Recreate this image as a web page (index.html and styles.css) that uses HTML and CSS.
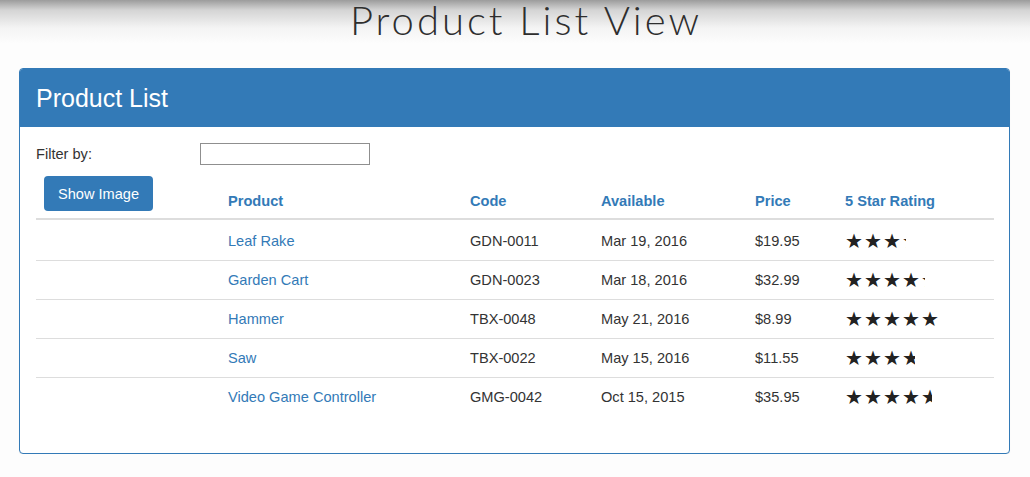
FILE: index.html
```html
<!DOCTYPE html>
<html>
<head>
<meta charset="utf-8">
<title>Product List View</title>
<link rel="stylesheet" href="styles.css">
</head>
<body>
<div class="top">
  <h1 class="title">Product List View</h1>
</div>
<div class="panel">
  <div class="panel-heading">Product List</div>
  <div class="panel-body">
    <div class="filter-row">
      <label class="filter-label">Filter by:</label>
      <input class="filter-input" type="text">
    </div>
    <table class="table">
      <thead>
        <tr>
          <th class="c-img"><button class="btn">Show Image</button></th>
          <th class="c-prod">Product</th>
          <th class="c-code">Code</th>
          <th class="c-avail">Available</th>
          <th class="c-price">Price</th>
          <th class="c-rate">5 Star Rating</th>
        </tr>
      </thead>
      <tbody>
        <tr>
          <td></td><td><a class="link">Leaf Rake</a></td><td>GDN-0011</td><td>Mar 19, 2016</td><td>$19.95</td>
          <td><span class="stars" style="width:61px"><span>★</span><span>★</span><span>★</span><span>★</span><span>★</span></span></td>
        </tr>
        <tr>
          <td></td><td><a class="link">Garden Cart</a></td><td>GDN-0023</td><td>Mar 18, 2016</td><td>$32.99</td>
          <td><span class="stars" style="width:80px"><span>★</span><span>★</span><span>★</span><span>★</span><span>★</span></span></td>
        </tr>
        <tr>
          <td></td><td><a class="link">Hammer</a></td><td>TBX-0048</td><td>May 21, 2016</td><td>$8.99</td>
          <td><span class="stars" style="width:95px"><span>★</span><span>★</span><span>★</span><span>★</span><span>★</span></span></td>
        </tr>
        <tr>
          <td></td><td><a class="link">Saw</a></td><td>TBX-0022</td><td>May 15, 2016</td><td>$11.55</td>
          <td><span class="stars" style="width:70px"><span>★</span><span>★</span><span>★</span><span>★</span><span>★</span></span></td>
        </tr>
        <tr>
          <td></td><td><a class="link">Video Game Controller</a></td><td>GMG-0042</td><td>Oct 15, 2015</td><td>$35.95</td>
          <td><span class="stars" style="width:87px"><span>★</span><span>★</span><span>★</span><span>★</span><span>★</span></span></td>
        </tr>
      </tbody>
    </table>
  </div>
</div>
</body>
</html>
```
FILE: styles.css
```css
html, body {
  margin: 0;
  padding: 0;
  background: #fdfdfd;
  font-family: "Liberation Sans", Arial, sans-serif;
  font-size: 14.6px;
  color: #333;
}
.top {
  height: 60px;
  background: linear-gradient(to bottom, #9c9c9c 0px, #d4d4d4 10px, #f4f4f4 28px, #fdfdfd 44px);
}
.title {
  margin: 0;
  padding-left: 22px;
  text-align: center;
  font-family: "Lato", "Open Sans", sans-serif;
  font-weight: 300;
  font-size: 40px;
  letter-spacing: 3px;
  line-height: 40px;
  color: #2e2e2e;
}
.panel {
  margin: 8px 20px 0 19px;
  border: 1px solid #337ab7;
  border-radius: 4px;
  background: #fff;
  box-shadow: 0 1px 1px rgba(0,0,0,0.05);
}
.panel-heading {
  background: #337ab7;
  color: #fff;
  font-size: 25px;
  height: 58px;
  line-height: 58px;
  padding: 0 16px;
  border-radius: 3px 3px 0 0;
}
.panel-body {
  padding: 15px 15px 37px 16px;
}
.filter-row {
  display: flex;
  align-items: center;
  height: 24px;
}
.filter-label {
  width: 164px;
}
.filter-input {
  width: 170px;
  height: 22px;
  box-sizing: border-box;
  border: 1px solid #8f8f8f;
  margin: 0;
  padding: 0 3px;
}
.table {
  width: 100%;
  border-collapse: collapse;
  margin-top: 2px;
}
.table th {
  text-align: left;
  vertical-align: bottom;
  padding: 8px 8px 7px;
  color: #337ab7;
  font-weight: bold;
  line-height: 20px;
  border-bottom: 2px solid #ddd;
}
.table td {
  padding: 9px 8px;
  height: 20px;
  line-height: 20px;
  border-top: 1px solid #ddd;
  vertical-align: middle;
}
.table tbody tr:first-child td {
  border-top: 0;
  padding-top: 11px;
}
.c-img { width: 168px; }
.c-prod { width: 226px; }
.c-code { width: 115px; }
.c-avail { width: 138px; }
.c-price { width: 74px; }
.btn {
  display: block;
  height: 35px;
  width: 109px;
  padding: 0;
  border: 0;
  border-radius: 4px;
  background: #337ab7;
  color: #fff;
  font-family: "Liberation Sans", Arial, sans-serif;
  font-size: 14.6px;
}
.link {
  color: #337ab7;
  text-decoration: none;
}
.stars {
  display: inline-block;
  overflow: hidden;
  white-space: nowrap;
  vertical-align: top;
  height: 24px;
  line-height: 24px;
  margin: -2px 0;
  color: #222;
  font-family: "DejaVu Sans", sans-serif;
  font-size: 20px;
}
.stars span {
  display: inline-block;
  width: 19px;
}
```
